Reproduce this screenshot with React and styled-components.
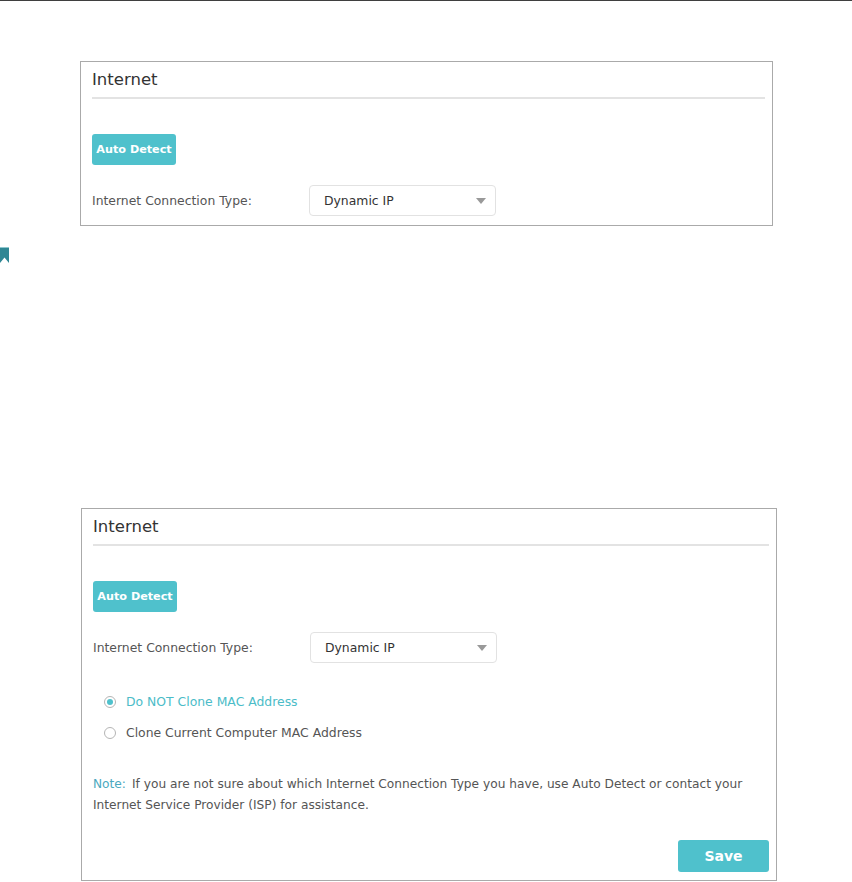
import React, { useState } from 'react'
import styled, { createGlobalStyle } from 'styled-components';

const GlobalStyle = createGlobalStyle`
    html, body {
        margin: 0;
        padding: 0;
        background: #ffffff;
    }
    body {
        font-family: "DejaVu Sans", Verdana, sans-serif;
        font-size: 12.4px;
        color: #555555;
    }
`;

const Page = styled.div`
    width: 852px;
    height: 882px;
    overflow: hidden;
    border-top: 1px solid #3f3f3f;
    box-sizing: border-box;
`

const Panel = styled.div`
    box-sizing: border-box;
    margin-left: ${(p) => p.left}px;
    margin-top: ${(p) => p.top}px;
    width: ${(p) => p.width}px;
    border: 1px solid #aaaaaa;
    padding: 0 7px ${(p) => p.bottom}px 11px;
    background: #ffffff;
`

const PanelTitle = styled.div`
    font-size: 16.5px;
    line-height: 20px;
    color: #333333;
    padding: 8px 0 7px 0;
    border-bottom: 2px solid #e3e3e3;
`

const Button = styled.button`
    display: flex;
    align-items: center;
    justify-content: center;
    box-sizing: border-box;
    height: ${(p) => p.h || 31}px;
    width: ${(p) => p.w}px;
    padding: 0;
    border: none;
    border-radius: 3px;
    background: #4fc1cc;
    color: #ffffff;
    font-family: "DejaVu Sans", Verdana, sans-serif;
    font-weight: bold;
    font-size: ${(p) => p.size || 11.2}px;
    cursor: pointer;
`

const DetectRow = styled.div`
    margin-top: 35px;
`

const FieldRow = styled.div`
    display: flex;
    align-items: center;
    margin-top: 20px;
`

const Label = styled.div`
    width: 217px;
    color: #555555;
`

const Select = styled.div`
    position: relative;
    box-sizing: border-box;
    width: 187px;
    height: 31px;
    border: 1px solid #e2e2e2;
    border-radius: 4px;
    display: flex;
    align-items: center;
    padding-left: 14px;
    color: #333333;
`

const Caret = styled.span`
    position: absolute;
    right: 9px;
    top: 12px;
    width: 0;
    height: 0;
    border-left: 5px solid transparent;
    border-right: 5px solid transparent;
    border-top: 6px solid #999999;
`

const RadioGroup = styled.div`
    margin-top: 23px;
    padding-left: 11px;
`

const RadioRow = styled.label`
    display: flex;
    align-items: center;
    height: 31px;
    color: ${(p) => (p.active ? '#4bbcc8' : '#555555')};
    cursor: pointer;
`

const RadioDot = styled.span`
    box-sizing: border-box;
    width: 12px;
    height: 12px;
    border-radius: 50%;
    border: 1px solid #b5b5b5;
    margin-right: 10px;
    display: flex;
    align-items: center;
    justify-content: center;
    &::after {
        content: '';
        width: 6px;
        height: 6px;
        border-radius: 50%;
        background: ${(p) => (p.active ? '#4fc1cc' : 'transparent')};
    }
`

const Note = styled.div`
    margin-top: 26px;
    line-height: 21px;
    font-size: 12.2px;
    color: #555555;
`

const NoteTag = styled.span`
    color: #4ba9c0;
    margin-right: 6px;
`

const Footer = styled.div`
    display: flex;
    justify-content: flex-end;
    margin-top: 24px;
`

const Marker = styled.div`
    margin-top: 21px;
    width: 9px;
    height: 16px;
    line-height: 0;
`

function InternetHeader() {
    return <PanelTitle>Internet</PanelTitle>
}

function ConnectionFields() {
    return (
        <>
            <DetectRow>
                <Button w={84}>Auto Detect</Button>
            </DetectRow>
            <FieldRow>
                <Label>Internet Connection Type:</Label>
                <Select>
                    Dynamic IP
                    <Caret />
                </Select>
            </FieldRow>
        </>
    )
}

function App() {
    const [clone, setClone] = useState(false);
    return (
        <>
            <GlobalStyle />
            <Page>
                <Panel left={80} top={60} width={693} bottom={9}>
                    <InternetHeader />
                    <ConnectionFields />
                </Panel>
                <Marker>
                    <svg width="9" height="16" viewBox="0 0 9 16">
                        <rect x="0" y="0" width="9" height="1" fill="#8fc7cf" />
                        <path d="M0 1 H9 V16 L4.5 10.5 L0 16 Z" fill="#2f8794" />
                    </svg>
                </Marker>
                <Panel left={81} top={245} width={696} bottom={8}>
                    <InternetHeader />
                    <ConnectionFields />
                    <RadioGroup>
                        <RadioRow active={!clone} onClick={() => setClone(false)}>
                            <RadioDot active={!clone} />
                            Do NOT Clone MAC Address
                        </RadioRow>
                        <RadioRow active={clone} onClick={() => setClone(true)}>
                            <RadioDot active={clone} />
                            Clone Current Computer MAC Address
                        </RadioRow>
                    </RadioGroup>
                    <Note>
                        <NoteTag>Note:</NoteTag>
                        If you are not sure about which Internet Connection Type you have, use Auto Detect or contact your
                        <br />
                        Internet Service Provider (ISP) for assistance.
                    </Note>
                    <Footer>
                        <Button w={91} h={32} size={14}>Save</Button>
                    </Footer>
                </Panel>
            </Page>
        </>
    )
}

export default App
